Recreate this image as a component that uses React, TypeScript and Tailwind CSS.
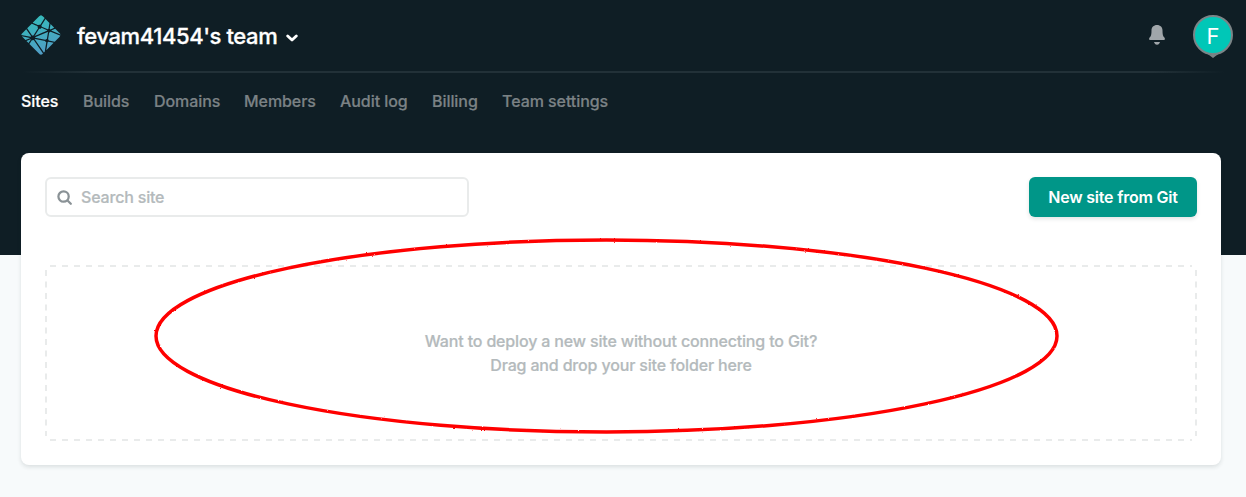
import React from "react";

const LOGO =
  "M28.589 14.135l-.014-.006c-.008-.003-.016-.006-.023-.013a.11.11 0 0 1-.028-.093l.773-4.726 3.625 3.626-3.77 1.604a.083.083 0 0 1-.033.006h-.015a.104.104 0 0 1-.02-.017 1.716 1.716 0 0 0-.495-.381zm5.258-.288l3.876 3.876c.805.806 1.208 1.208 1.355 1.674.022.069.04.138.054.209l-9.263-3.923a.728.728 0 0 0-.015-.006c-.037-.015-.08-.032-.08-.07 0-.038.044-.056.081-.071l.012-.005 3.98-1.684zm5.127 7.003c-.2.376-.59.766-1.25 1.427l-4.37 4.369-5.652-1.177-.03-.006c-.05-.008-.103-.017-.103-.062a1.706 1.706 0 0 0-.655-1.193c-.023-.023-.017-.059-.01-.092 0-.005 0-.01.002-.014l1.063-6.526.004-.022c.006-.05.015-.108.06-.108a1.73 1.73 0 0 0 1.16-.665c.009-.01.015-.021.027-.027.032-.015.07 0 .103.014l9.65 4.082zm-6.625 6.801l-7.186 7.186 1.23-7.56.002-.01c.001-.01.003-.02.006-.029.01-.024.036-.034.061-.044l.012-.005a1.85 1.85 0 0 0 .695-.517c.024-.028.053-.055.09-.06a.09.09 0 0 1 .029 0l5.06 1.04zm-8.707 8.707l-.81.81-8.955-12.942a.424.424 0 0 0-.01-.014c-.014-.019-.029-.038-.026-.06.001-.016.011-.03.022-.042l.01-.013c.027-.04.05-.08.075-.123l.02-.035.003-.003c.014-.024.027-.047.051-.06.021-.01.05-.006.073-.001l9.921 2.046a.164.164 0 0 1 .076.033c.013.013.016.027.019.043a1.757 1.757 0 0 0 1.028 1.175c.028.014.016.045.003.078a.238.238 0 0 0-.015.045c-.125.76-1.197 7.298-1.485 9.063zm-1.692 1.691c-.597.591-.949.904-1.347 1.03a2 2 0 0 1-1.206 0c-.466-.148-.869-.55-1.674-1.356L8.73 28.73l2.349-3.643c.011-.018.022-.034.04-.047.025-.018.061-.01.091 0a2.434 2.434 0 0 0 1.638-.083c.027-.01.054-.017.075.002a.19.19 0 0 1 .028.032L21.95 38.05zM7.863 27.863L5.8 25.8l4.074-1.738a.084.084 0 0 1 .033-.007c.034 0 .054.034.072.065a2.91 2.91 0 0 0 .13.184l.013.016c.012.017.004.034-.008.05l-2.25 3.493zm-2.976-2.976l-2.61-2.61c-.444-.444-.766-.766-.99-1.043l7.936 1.646a.84.84 0 0 0 .03.005c.049.008.103.017.103.063 0 .05-.059.073-.109.092l-.023.01-4.337 1.837zM.831 19.892a2 2 0 0 1 .09-.495c.148-.466.55-.868 1.356-1.674l3.34-3.34a2175.525 2175.525 0 0 0 4.626 6.687c.027.036.057.076.026.106-.146.161-.292.337-.395.528a.16.16 0 0 1-.05.062c-.013.008-.027.005-.042.002H9.78L.831 19.891zm5.68-6.403l4.491-4.491c.422.185 1.958.834 3.332 1.414 1.04.44 1.988.84 2.286.97.03.012.057.024.07.054.008.018.004.041 0 .06a2.003 2.003 0 0 0 .523 1.828c.03.03 0 .073-.026.11l-.014.021-4.56 7.063c-.012.02-.023.037-.043.05-.024.015-.058.008-.086.001a2.274 2.274 0 0 0-.543-.074c-.164 0-.342.03-.522.063h-.001c-.02.003-.038.007-.054-.005a.21.21 0 0 1-.045-.051l-4.808-7.013zm5.398-5.398l5.814-5.814c.805-.805 1.208-1.208 1.674-1.355a2 2 0 0 1 1.206 0c.466.147.869.55 1.674 1.355l1.26 1.26-4.135 6.404a.155.155 0 0 1-.041.048c-.025.017-.06.01-.09 0a2.097 2.097 0 0 0-1.92.37c-.027.028-.067.012-.101-.003-.54-.235-4.74-2.01-5.341-2.265zm12.506-3.676l3.818 3.818-.92 5.698v.015a.135.135 0 0 1-.008.038c-.01.02-.03.024-.05.03a1.83 1.83 0 0 0-.548.273.154.154 0 0 0-.02.017c-.011.012-.022.023-.04.025a.114.114 0 0 1-.043-.007l-5.818-2.472-.011-.005c-.037-.015-.081-.033-.081-.071a2.198 2.198 0 0 0-.31-.915c-.028-.046-.059-.094-.035-.141l4.066-6.303zm-3.932 8.606l5.454 2.31c.03.014.063.027.076.058a.106.106 0 0 1 0 .057c-.016.08-.03.171-.03.263v.153c0 .038-.039.054-.075.069l-.011.004c-.864.369-12.13 5.173-12.147 5.173-.017 0-.035 0-.052-.017-.03-.03 0-.072.027-.11a.76.76 0 0 0 .014-.02l4.482-6.94.008-.012c.026-.042.056-.089.104-.089l.045.007c.102.014.192.027.283.027.68 0 1.31-.331 1.69-.897a.16.16 0 0 1 .034-.04c.027-.02.067-.01.098.004zm-6.246 9.185l12.28-5.237s.018 0 .035.017c.067.067.124.112.179.154l.027.017c.025.014.05.03.052.056 0 .01 0 .016-.002.025L25.756 23.7l-.004.026c-.007.05-.014.107-.061.107a1.729 1.729 0 0 0-1.373.847l-.005.008c-.014.023-.027.045-.05.057-.021.01-.048.006-.07.001l-9.793-2.02c-.01-.002-.152-.519-.163-.52z";

const TABS = [
  { label: "Sites", style: "w-[38px] text-white" },
  { label: "Builds", style: "w-[47px] text-[#7b8285]" },
  { label: "Domains", style: "w-[66px] text-[#7b8285]" },
  { label: "Members", style: "w-[72px] text-[#7b8285]" },
  { label: "Audit log", style: "w-[68px] text-[#7b8285]" },
  { label: "Billing", style: "w-[46px] text-[#7b8285]" },
  { label: "Team settings", style: "w-[108px] text-[#7b8285]" },
];

function Logo() {
  return (
    <svg className="size-10" viewBox="0.5 0.5 39 39">
      <defs>
        <linearGradient id="logo" x1="0.3" y1="0" x2="0.6" y2="1">
          <stop offset="0" stopColor="#34bcba" />
          <stop offset="1" stopColor="#529cc6" />
        </linearGradient>
      </defs>
      <path fill="url(#logo)" d={LOGO} />
    </svg>
  );
}

function Header() {
  return (
    <header className="flex h-[71px] items-start justify-between pl-[21px] pr-[13px] pt-[15px]">
      <div className="flex h-10 items-center">
        <Logo />
        <span className="ml-4 mt-px w-[201px] whitespace-nowrap text-[22px] leading-6 font-medium tracking-[-0.41px] text-white [-webkit-text-stroke:0.3px]">
          fevam41454's team
        </span>
        <svg className="ml-2 mt-[6px] h-2 w-3" viewBox="0 0 12 8" fill="none" stroke="white" strokeWidth="2.8" strokeLinecap="round" strokeLinejoin="round">
          <path d="M1.7 2 6 6 10.3 2" />
        </svg>
      </div>
      <div className="flex items-start">
        <svg className="mr-[28px] mt-[9px] h-[22px] w-4" viewBox="0 0 16 22" fill="#a0a6aa">
          <path d="M8 1C4.6 1 2.500 3.4 2.500 6.4c0 4-.4 5.6-1.900 7.2C-.4 15 .2 16 1.4 16h13.2c1.2 0 1.800-1 .8-2.4-1.500-1.6-1.900-3.2-1.900-7.2C13.500 3.400 11.400 1 8 1Z" />
          <path d="M5 18h6c-.4 1.600-1.500 2.700-3 2.700S5.400 19.600 5 18Z" />
        </svg>
        <div className="relative flex size-10 items-center justify-center rounded-full border-2 border-[#7b8487] bg-[#00c7b7] text-[22px] text-white">
          <span className="mt-[3px]">F</span>
          <svg className="absolute -bottom-[5px] left-[12px] h-[6px] w-[12px]" viewBox="0 0 12 6" fill="#7b8487">
            <path d="M0 1.500Q6 3.500 12 1.500L6 6Z" />
          </svg>
        </div>
      </div>
    </header>
  );
}

export default function App() {
  return (
    <div className="relative h-[497px] w-[1246px] overflow-hidden bg-[linear-gradient(#0f1e25_255px,#f7fafb_255px)] font-['Inter','Liberation_Sans',sans-serif]">
      <Header />
      <div className="mx-[21px] h-[2px] bg-[linear-gradient(90deg,transparent,#223138_6%,#223138_94%,transparent)]" />
      <nav className="flex h-20 items-start gap-6 pl-[21px] pt-4 text-base leading-6 font-medium tracking-[-0.06px] [-webkit-text-stroke:0.2px]">
        {TABS.map((tab) => (
          <a key={tab.label} className={"whitespace-nowrap " + tab.style}>
            {tab.label}
          </a>
        ))}
      </nav>
      <main className="mx-[21px] flex h-[312px] w-[1200px] flex-col rounded-lg bg-white p-6 shadow-[0_2px_4px_rgba(14,30,37,0.12)]">
        <div className="flex justify-between">
          <label className="flex h-10 w-[424px] items-center rounded-md border-2 border-[#e9ebeb] pl-[10px] text-base font-medium tracking-[-0.18px] text-[#b4babc]">
            <svg className="mr-[9px] size-[15px]" viewBox="0 0 16 16" fill="none" stroke="#8a9296" strokeWidth="2.4" strokeLinecap="round">
              <circle cx="7" cy="7" r="5.500" />
              <path d="m11.200 11.200 3.500 3.500" />
            </svg>
            <span className="[-webkit-text-stroke:0.2px]">Search site</span>
          </label>
          <button className="h-10 w-[168px] whitespace-nowrap rounded-md bg-[#009688] text-base font-semibold tracking-[-0.2px] text-white shadow-[0_2px_4px_rgba(14,30,37,0.12)]">
            New site from Git
          </button>
        </div>
        <section className="relative mt-12 flex h-44 items-center justify-center text-center text-base leading-6 font-medium tracking-[-0.16px] text-[#b4babc] [-webkit-text-stroke:0.2px]">
          <svg className="absolute inset-0 h-44 w-[1152px]" viewBox="0 0 1152 176" fill="none" stroke="#e9ebeb" strokeWidth="2">
            <path strokeDasharray="6 6" d="M5 1H1147M5 175H1147" />
            <path strokeDasharray="6 5.500" d="M1 5V171M1151 5V171" />
          </svg>
          <p>
            Want to deploy a new site without connecting to Git?
            <br />
            Drag and drop your site folder here
          </p>
        </section>
      </main>
      <svg className="pointer-events-none absolute left-0 top-0 h-[497px] w-[1246px]" viewBox="0 0 1246 497" fill="none">
        <filter id="rough" filterUnits="userSpaceOnUse" x="140" y="225" width="935" height="220" colorInterpolationFilters="sRGB">
          <feTurbulence type="fractalNoise" baseFrequency="0.5" numOctaves="2" seed="4" />
          <feDisplacementMap in="SourceGraphic" scale="2" xChannelSelector="R" yChannelSelector="G" />
        </filter>
        <ellipse cx="606.500" cy="336" rx="450.500" ry="96" stroke="#ff0000" strokeWidth="3.500" filter="url(#rough)" />
      </svg>
    </div>
  );
}
